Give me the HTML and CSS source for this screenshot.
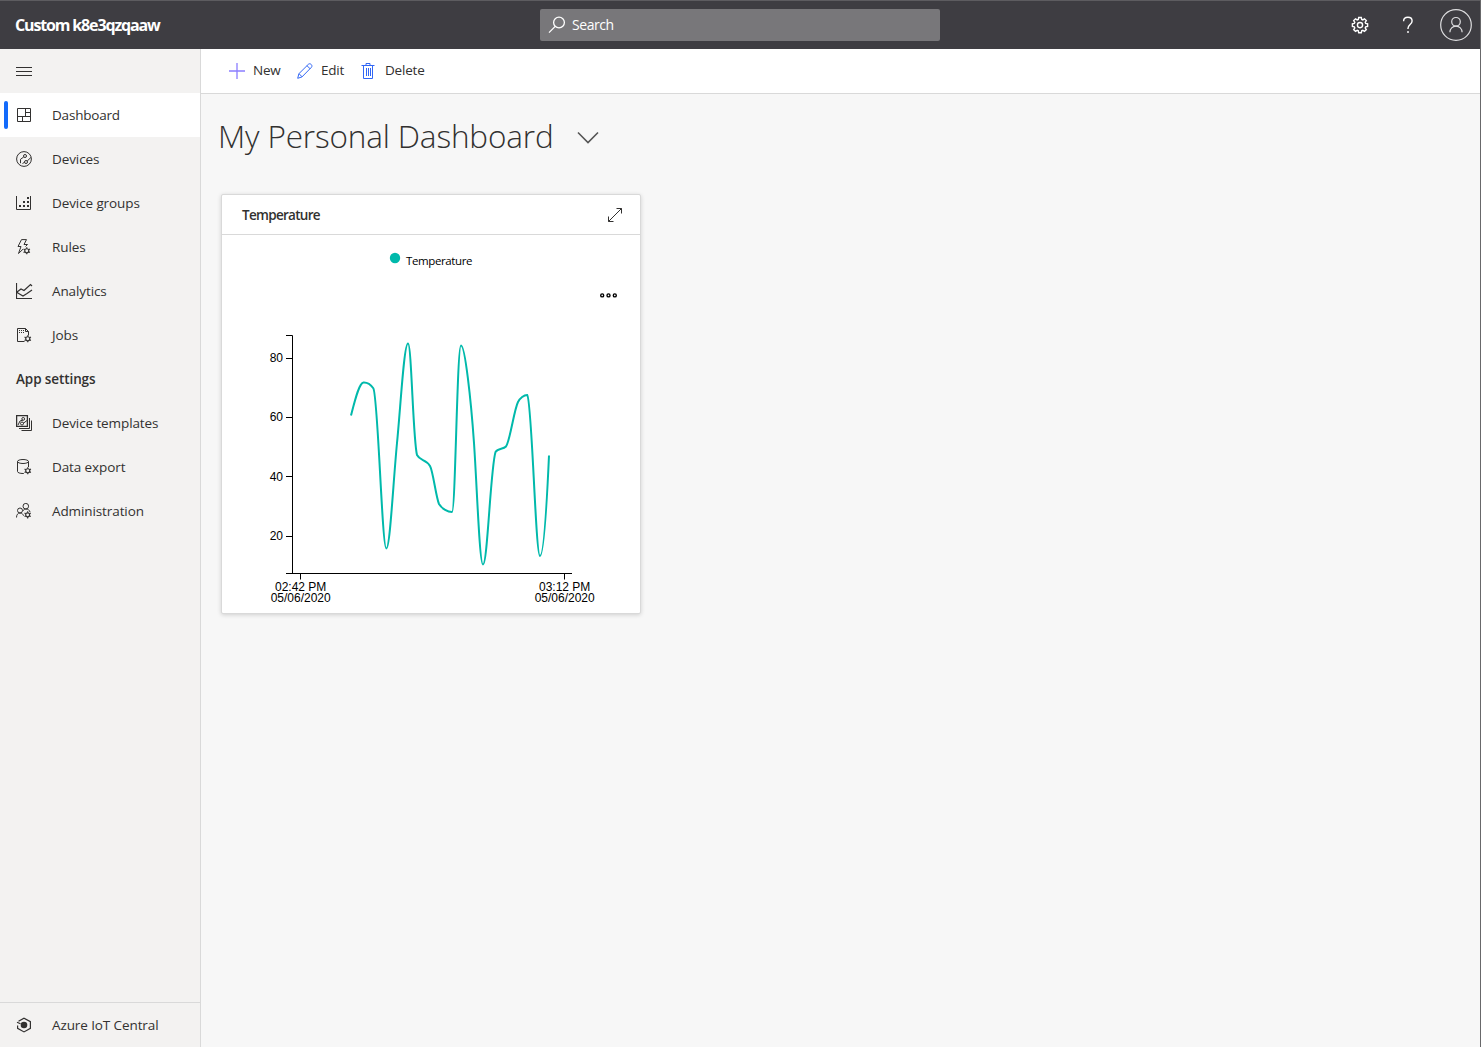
FILE: index.html
```html
<!DOCTYPE html>
<html lang="en">
<head>
<meta charset="utf-8">
<title>My Personal Dashboard</title>
<link rel="stylesheet" href="styles.css">
</head>
<body>
<svg class="defs" width="0" height="0" aria-hidden="true">
  <symbol id="cog" viewBox="0 0 8 8"><circle cx="4" cy="4" r="1.9" fill="none" stroke="currentColor" stroke-width="1.1"/><path d="M4 .6v1.400M4 6v1.400M1 2.300l1.200.7M5.800 5l1.200.7M1 5.700L2.200 5M5.800 3L7 2.300" fill="none" stroke="currentColor" stroke-width="1.1"/></symbol>
</svg>
<header class="topbar">
  <div class="brand">Custom k8e3qzqaaw</div>
  <div class="search">
    <svg width="18" height="18" viewBox="0 0 18 18"><circle cx="11" cy="6.500" r="5.400"/><path d="M7.200 10.400L1 16.600"/></svg>
    <span>Search</span>
  </div>
  <div class="top-actions">
    <svg width="18" height="18" viewBox="0 0 18 18"><path d="M7.700 1.500h2.600l.4 1.900 1.100.5 1.700-1.100 1.800 1.800-1.100 1.700.5 1.100 1.900.4v2.600l-1.900.4-.5 1.100 1.100 1.700-1.800 1.800-1.700-1.100-1.100.5-.4 1.900H7.700l-.4-1.900-1.100-.5-1.700 1.100-1.800-1.800 1.100-1.700-.5-1.100-1.900-.4V7.800l1.900-.4.5-1.100-1.100-1.700 1.800-1.800 1.700 1.100 1.100-.5z"/><circle cx="9" cy="9.100" r="2.600"/></svg>
    <svg width="12" height="18" viewBox="0 0 12 18"><path d="M1.600 5.200C1.600 2.700 3.500 1.300 5.900 1.300c2.500 0 4.200 1.400 4.200 3.700 0 3.400-4.100 3.700-4.100 7.300v.6"/><path d="M6 15v2"/></svg>
    <svg class="avatar" width="32" height="32" viewBox="0 0 32 32"><circle cx="16" cy="16" r="15.300"/><circle cx="16" cy="12.800" r="4.300"/><path d="M9.900 23.300c0-3.600 2.700-6.200 6.100-6.200s6.100 2.600 6.100 6.200"/></svg>
  </div>
</header>
<div class="shell">
  <nav class="sidebar">
    <div class="item burger"><svg width="16" height="16" viewBox="0 0 16 16"><path d="M0 4.500h16M0 8.500h16M0 12.500h16"/></svg></div>
    <div class="item active"><svg width="16" height="16" viewBox="0 0 16 16"><path d="M1.500 1.500h13v13h-13zM9.500 1.500v8M1.500 9.500h13M9.500 5.500h5M6.500 9.500v5"/></svg><span>Dashboard</span></div>
    <div class="item"><svg width="16" height="16" viewBox="0 0 16 16"><circle cx="8" cy="8" r="7.400"/><circle cx="9" cy="5" r="1.500"/><circle cx="10" cy="11" r="1.500"/><path d="M7.700 6L4.500 8.300v3.900M11.200 10l3.700-3.500M8.500 11.300L6.500 12.500"/></svg><span>Devices</span></div>
    <div class="item"><svg width="16" height="16" viewBox="0 0 16 16"><path d="M.500 1v13.500h14V1"/><path class="solid" d="M3 10h2v2H3zM7 10h2v2H7zM11 10h2v2h-2zM7 6h2v2H7zM11 6h2v2h-2zM11 2h2v2h-2z"/></svg><span>Device groups</span></div>
    <div class="item"><svg width="16" height="16" viewBox="0 0 16 16"><path d="M5.500.600h5L8 5.500h3.500L9.500 7.500M5.500.600L2 7.500h3L2.500 14.500 7 10.200"/><use href="#cog" x="6.500" y="7.500" width="8.500" height="8.500"/></svg><span>Rules</span></div>
    <div class="item"><svg class="wide" width="17" height="16" viewBox="0 0 17 16"><path stroke-width="1.200" d="M.500 0v15.500H16M1 9l4-3 3 1.500 6.500-6L16 3M1 9.500L7 13l4-2.500L16 7"/></svg><span>Analytics</span></div>
    <div class="item"><svg width="16" height="16" viewBox="0 0 16 16"><path d="M8.500 14.500h-7v-13h8l3 3v4M9.500 1.500v3h3"/><path stroke-dasharray="1 1" d="M3 3.500h5M3 5.500h5"/><use href="#cog" x="7.500" y="7.500" width="8.500" height="8.500"/></svg><span>Jobs</span></div>
    <div class="item heading"><span>App settings</span></div>
    <div class="item"><svg width="16" height="16" viewBox="0 0 16 16"><path stroke-width="1.300" d="M.600.600h10.800v10.800H.600z"/><path d="M13.500 3v10.500H3M15.500 5.500v10H5.500M2 10l2-4 3-1M7 8.500l4-3"/><circle cx="7.200" cy="3.900" r="1.400"/><circle cx="6" cy="8.500" r="1.500"/></svg><span>Device templates</span></div>
    <div class="item"><svg width="16" height="16" viewBox="0 0 16 16"><ellipse cx="7" cy="2.500" rx="5.500" ry="2"/><path d="M1.500 2.500v10c0 1.200 2.500 2 5.500 2h.8M12.500 2.500v5.500"/><use href="#cog" x="7.500" y="7.500" width="8.500" height="8.500"/></svg><span>Data export</span></div>
    <div class="item"><svg width="16" height="16" viewBox="0 0 16 16"><circle cx="4" cy="7.500" r="2.500"/><circle cx="9.800" cy="3.200" r="2.800"/><path d="M.500 14.500c0-2.800 1.400-4.500 3.500-4.500s3 1.200 3.500 2.700M6.800 8c.7-1.300 1.700-2 3-2 2.200 0 3.700 1 4.200 3"/><use href="#cog" x="7.500" y="7.700" width="8.300" height="8.300"/></svg><span>Administration</span></div>
    <div class="item foot"><svg width="16" height="16" viewBox="0 0 16 16"><path stroke-width="1.200" d="M2.500 4.300L8 1.200l6.400 3.500v6.600L8 14.900l-6.400-3.600V8.500M1 5.200l3.500 1.600"/><circle class="solid" cx="8" cy="8" r="3.300"/></svg><span>Azure IoT Central</span></div>
  </nav>
  <main class="main">
    <div class="commands">
      <div class="cmd cmd-new"><svg width="16" height="16" viewBox="0 0 16 16"><path stroke="#8b7dff" stroke-width="1.300" d="M8 0v16M0 8h16"/></svg><span>New</span></div>
      <div class="cmd cmd-edit"><svg width="16" height="16" viewBox="0 0 16 16"><path d="M.700 15.300l1.200-4.600L11.500 1.200c1.700-1.500 4.500 1.200 3 3L5 13.900zM10 2.700l3.200 3.200M2 10.700l3.100 3.100"/></svg><span>Edit</span></div>
      <div class="cmd cmd-delete"><svg width="14" height="16" viewBox="0 0 14 16"><path d="M.500 2.500h13M5 2.500v-2h4v2M2.500 2.500v13h9v-13M5.500 5v8M7.500 5v8M9.500 5v8"/></svg><span>Delete</span></div>
    </div>
    <div class="title"><h1>My Personal Dashboard</h1><svg width="22" height="13" viewBox="0 0 22 13"><path d="M1 1.500l10 10 10-10"/></svg></div>
    <section class="card">
      <div class="card-head"><h2>Temperature</h2><svg width="16" height="16" viewBox="0 0 16 16"><path d="M1.500 14.500l13-13M9.500 1.500h5v5M1.500 9.500v5h5"/></svg></div>
      <svg class="chart" width="418" height="378" viewBox="222 235 418 378">
        <circle class="legend-dot" cx="395" cy="258" r="5.200"/>
        <text class="legend" x="406" y="265" textLength="66.500">Temperature</text>
        <g class="dots"><circle cx="602.200" cy="295.400" r="1.500"/><circle cx="608.500" cy="295.400" r="1.500"/><circle cx="614.800" cy="295.400" r="1.500"/></g>
        <path class="axis" d="M286 335.500h6.500v238M286 358.500h6M286 417.500h6M286 476.500h6M286 536.500h6M286 573.500h286M300.500 573.500v6M564.500 573.500v6"/>
        <g class="ticks" text-anchor="end"><text x="283" y="362">80</text><text x="283" y="421">60</text><text x="283" y="481">40</text><text x="283" y="540">20</text></g>
        <g class="ticks" text-anchor="middle"><text x="300.700" y="591">02:42 PM</text><text x="300.700" y="602">05/06/2020</text><text x="564.700" y="591">03:12 PM</text><text x="564.700" y="602">05/06/2020</text></g>
        <path class="line" d="M351 415.500C355 400 359 383 363.500 382.500C367 382.300 371 385 373.300 388.300C378 395 382 548.500 386.300 548.500C390 548.500 393 485 397 443C400.500 408 404 343.500 408 343.500C411.500 343.500 413 440 417 455C420 461 426 459 430 466C433 471 436 497 439 504C442 509 448 512 452 512C455.500 512 457 345.500 461 345.500C465 345.500 471 400 474 443C477 487 479.500 564.500 483 564.500C487.500 564.500 490.500 468 495.500 452C498 448 503 449.500 506 446.500C510 441 514 410 518 402C520 398 524 395 527.200 395C532 400 535.500 556 540 556C544 556 547 500 549 455.500"/>
      </svg>
    </section>
  </main>
</div>
</body>
</html>
```
FILE: styles.css
```css
* { box-sizing: border-box; }
body { margin: 0; height: 1047px; display: flex; flex-direction: column; overflow: hidden; background: #f7f7f7; border-right: 1px solid #68686a; font: 13.5px/20px "Open Sans", "Noto Sans", sans-serif; color: #323130; }
svg { display: block; flex: none; fill: none; stroke: currentColor; stroke-width: 1; }
.defs { position: absolute; }
.topbar { flex: none; height: 49px; display: grid; grid-template-columns: 540px 400px 1fr; align-items: center; background: #3e3d42; border-top: 1px solid #5d5c60; color: #fff; }
.brand { padding: 0 0 0 15px; font-size: 16px; font-weight: 700; letter-spacing: -1.15px; }
.search { height: 32px; padding-left: 8px; display: flex; align-items: center; gap: 6px; background: #78777a; border-radius: 2px; font-size: 14px; letter-spacing: -.45px; }
.search svg { stroke-width: 1.3; }
.top-actions { display: flex; align-items: center; justify-content: flex-end; padding-right: 8px; }
.top-actions svg { stroke-width: 1.4; margin-right: 33px; }
.top-actions svg + svg { margin-right: 26px; }
.top-actions .avatar.avatar { stroke-width: 1.2; color: #dedee0; margin-right: 0; }
.shell { flex: 1; display: flex; min-height: 0; }
.sidebar { width: 201px; flex: none; display: flex; flex-direction: column; background: #f3f2f1; border-right: 1px solid #d9d9d9; letter-spacing: -.1px; }
.item { flex: none; height: 44px; display: flex; align-items: center; padding-left: 16px; }
.item svg { margin-right: 20px; }
.item .wide { margin-right: 19px; }
.item .solid { fill: currentColor; stroke: none; }
.item span { white-space: nowrap; }
.active { padding-left: 4px; background: #fff; font-weight: 500; letter-spacing: -.2px; }
.active::before { content: ""; width: 4px; height: 28px; margin-right: 8px; border-radius: 2px; background: #136bfb; }
.heading { font-weight: 600; }
.foot { height: 45px; margin-top: auto; border-top: 1px solid #d9d9d9; }
.main { flex: 1; min-width: 0; }
.commands { height: 45px; display: flex; align-items: center; padding: 0 0 1px 28px; background: #fff; border-bottom: 1px solid #d9d9d9; }
.cmd { display: flex; align-items: center; gap: 8px; letter-spacing: -.2px; }
.cmd svg { color: #3267f5; }
.cmd span { padding-bottom: 2px; }
.cmd-new { width: 68px; }
.cmd-edit { width: 64px; }
.cmd-delete { gap: 10px; }
.title { height: 100px; display: flex; align-items: flex-start; padding: 20px 0 0 17px; }
.title h1 { margin: 0; width: 359px; font-size: 31.5px; line-height: 44px; font-weight: 300; white-space: nowrap; letter-spacing: -.15px; }
.title svg { margin-top: 17px; stroke: #555; stroke-width: 1.6; }
.card { width: 420px; height: 420px; margin-left: 20px; background: #fff; border: 1px solid #d9d9d9; border-radius: 2px; box-shadow: 0 1px 4px rgba(0,0,0,.16); }
.card-head { height: 40px; display: flex; align-items: center; justify-content: space-between; padding: 0 17px 0 20px; border-bottom: 1px solid #d9d9d9; }
.card-head h2 { margin: 0; font-size: 13.5px; font-weight: 600; letter-spacing: -.7px; }
.chart text { stroke: none; fill: #000; }
.legend-dot { fill: #00b9ab; stroke: none; }
.legend { font-size: 11.5px; }
.ticks { font: 12px "Liberation Sans", Arial, sans-serif; }
.dots { stroke: #000; stroke-width: 1.4; }
.axis { stroke: #000; }
.line { stroke: #00b9ab; stroke-width: 2; }
```
